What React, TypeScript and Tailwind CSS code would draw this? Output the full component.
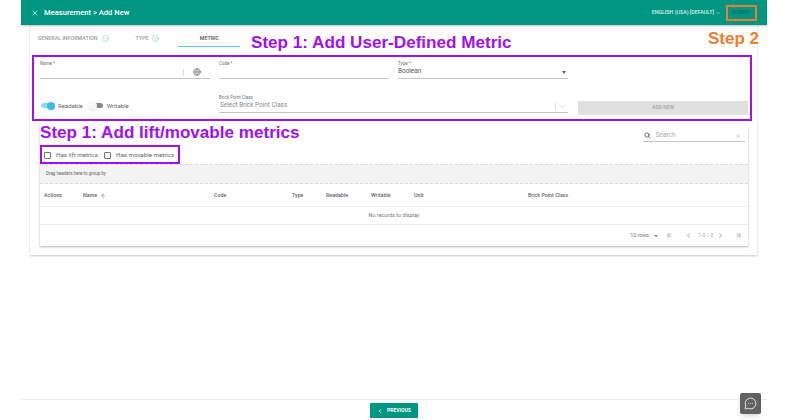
import { X, Globe, ChevronDown, CircleCheck, ArrowUp, Search, ChevronLeft, ChevronRight, ChevronFirst, ChevronLast, MessageCircleMore } from "lucide-react";

const columns = [
  { label: "Actions", w: "w-[39px]" },
  { label: "Name", w: "w-[131px]" },
  { label: "Code", w: "w-[78px]" },
  { label: "Type", w: "w-[34px]" },
  { label: "Readable", w: "w-[45px]" },
  { label: "Writable", w: "w-[43px]" },
  { label: "Unit", w: "w-[114px]" },
  { label: "Brick Point Class", w: "flex-1" },
];

function Field({ label, className, children }: { label: string; className: string; children?: React.ReactNode }) {
  return (
    <div className={`flex shrink-0 flex-col ${className}`}>
      <span className="h-[9px] text-[4.5px] leading-[9px] text-gray-500">{label}</span>
      <div className="box-content flex h-[8px] items-center justify-between border-b border-[#c4c4c4] pb-[2px] text-[6.4px] text-[#555]">
        {children}
      </div>
    </div>
  );
}

function Toggle({ on, label }: { on: boolean; label: string }) {
  return (
    <div className="flex items-center gap-[4px]">
      <div className={`relative h-[5px] w-[13px] rounded-full ${on ? "bg-[#8adbe8]" : "bg-[#8a8a8a]"}`}>
        <div
          className={`absolute top-[-1.5px] h-[8px] w-[8px] rounded-full shadow-sm ${on ? "right-[-1px] bg-[#3cc0da]" : "left-[-1px] bg-[#f7f7f7]"}`}
        />
      </div>
      <span className="text-[6px] text-[#666]">{label}</span>
    </div>
  );
}

export default function App() {
  return (
    <div className="relative flex h-[420px] w-[800px] flex-col overflow-hidden bg-white px-[21px] font-['Roboto',sans-serif]">
      <header className="flex h-[25px] w-[746px] shrink-0 items-center bg-[#009682] pl-[10px] pr-[10px] shadow-[0_1px_2px_rgba(0,0,0,0.25)]">
        <X size={8} strokeWidth={2} className="text-white" />
        <span className="ml-[5px] text-[7.6px] font-medium text-white">Measurement &gt; Add New</span>
        <span className="ml-auto text-[5.3px] font-medium text-[#d5efeb]">ENGLISH (USA) [DEFAULT]</span>
        <ChevronDown size={6} className="ml-[1px] text-[#d5efeb]" />
        <div className="ml-[5px] flex h-[16px] w-[31px] items-center justify-center border-2 border-[#ed7d31] text-[5px] font-medium text-[#0b6e62]">
          SUBMIT
        </div>
      </header>

      <main className="ml-[9px] h-[230px] w-[727px] shrink-0 shadow-[0_1px_2px_rgba(0,0,0,0.22)]">
        <nav className="flex h-[30px] items-start pl-[8px] pt-[10px] text-[5.3px] font-medium">
          <div className="flex items-center gap-[4px] text-[#9a9a9a]">
            <span>GENERAL INFORMATION</span>
            <CircleCheck size={7} className="text-[#7fcfc3]" />
          </div>
          <div className="ml-[27px] flex items-center gap-[4px] text-[#9a9a9a]">
            <span>TYPE</span>
            <CircleCheck size={7} className="text-[#7fcfc3]" />
          </div>
          <div className="ml-[19px] flex h-[12px] w-[62px] justify-center border-b border-[#56cfe1] text-[#555]">METRIC</div>
        </nav>

        <section className="relative ml-[2px] flex h-[66px] w-[720px] flex-col border-2 border-[#a010f0] pl-[6px] pr-[2px] pt-[2px]">
          <div className="flex gap-[9px]">
            <Field label="Name *" className="w-[170px]">
              <span />
              <div className="flex items-center">
                <span className="h-[7px] w-px bg-[#ddd]" />
                <Globe size={8} className="ml-[9px] text-[#666]" />
                <span className="ml-[9px]" />
              </div>
            </Field>
            <Field label="Code *" className="w-[170px]" />
            <Field label="Type *" className="w-[170px]">
              <span>Boolean</span>
              <span className="mr-[2px] h-0 w-0 border-x-[2.5px] border-t-[3px] border-x-transparent border-t-[#666]" />
            </Field>
          </div>
          <div className="mt-[14px] flex items-end gap-[9px]">
            <div className="flex h-[15px] w-[170px] shrink-0 items-center gap-[7px] pl-[1px]">
              <Toggle on label="Readable" />
              <Toggle on={false} label="Writable" />
            </div>
            <Field label="Brick Point Class" className="w-[349px]">
              <span className="pl-px text-[#8a8a8a]">Select Brick Point Class</span>
              <div className="flex items-center gap-[3px] pr-[2px]">
                <span className="h-[7px] w-px bg-[#ddd]" />
                <ChevronDown size={7} className="text-[#bbb]" />
              </div>
            </Field>
            <div className="mb-[-2px] ml-px flex h-[14px] w-[170px] shrink-0 items-center justify-center rounded-[1px] bg-[#e0e0e0] text-[5px] font-medium text-[#a8a8a8]">
              ADD NEW
            </div>
          </div>
        </section>

        <section className="relative ml-[10px] mt-[4px] flex h-[121px] w-[708px] flex-col shadow-[0_1px_2px_rgba(0,0,0,0.3)]">
          <div className="flex h-[17px] items-end justify-end pr-[3px]">
            <div className="flex h-[12px] w-[102px] items-center border-b border-[#c4c4c4] px-[1px] text-[6.5px] text-[#aaa]">
              <Search size={6.5} strokeWidth={3} className="text-[#555]" />
              <span className="ml-[5px]">Search</span>
              <X size={6} className="ml-auto mr-[3px] text-[#aaa]" />
            </div>
          </div>
          <div className="flex h-[22px] items-center pl-[4px] pt-[5px] text-[6.2px] text-[#666]">
            <div className="flex items-center gap-[5px]">
              <span className="h-[7px] w-[7px] rounded-[1px] border border-[#777]" />
              <span className="w-[42px] whitespace-nowrap">Has lift metrics</span>
            </div>
            <div className="ml-[6px] flex items-center gap-[5px]">
              <span className="h-[7px] w-[7px] rounded-[1px] border border-[#777]" />
              <span className="whitespace-nowrap">Has movable metrics</span>
            </div>
          </div>
          <div className="flex h-[20px] shrink-0 items-center border-y border-dashed border-[#ddd] bg-[#f3f3f3] pl-[6px] text-[4.5px] text-[#666]">
            Drag headers here to group by
          </div>
          <div className="flex h-[23px] shrink-0 items-center border-b border-[#eee] pl-[4px] pt-[1px] text-[5.3px] font-medium text-[#666]">
            {columns.map((c) => (
              <div key={c.label} className={`flex items-center gap-[3px] ${c.w}`}>
                {c.label}
                {c.label === "Name" && <ArrowUp size={6} />}
              </div>
            ))}
          </div>
          <div className="flex h-[18px] shrink-0 items-center justify-center border-b border-[#eee] text-[5.4px] text-[#777]">
            No records to display
          </div>
          <div className="flex h-[21px] shrink-0 items-center justify-end pr-[6px] text-[5.3px] text-[#777]">
            <span>10 rows</span>
            <span className="ml-[5px] h-0 w-0 border-x-[2px] border-t-[2.5px] border-x-transparent border-t-[#777]" />
            <ChevronFirst size={7} className="ml-[8px] text-[#666]" />
            <ChevronLeft size={7} className="ml-[12px] text-[#666]" />
            <span className="ml-[6px] w-[14px] whitespace-nowrap text-[#aaa]">1-0 / 0</span>
            <ChevronRight size={7} className="ml-[5px] text-[#666]" />
            <ChevronLast size={7} className="ml-[11px] text-[#666]" />
          </div>
        </section>
      </main>

      <footer className="mt-[144px] flex h-[21px] w-[746px] shrink-0 justify-center border-t border-[#eee] pt-[3px]">
        <div className="flex h-[15px] w-[48px] items-center justify-center gap-[4px] rounded-[1px] bg-[#009682] text-[5px] font-bold text-white shadow-sm">
          <ChevronLeft size={6} strokeWidth={3} />
          PREVIOUS
        </div>
      </footer>

      <div className="absolute left-[740px] top-[393px] flex h-[21px] w-[21px] items-center justify-center rounded-[2px] bg-[#616161] shadow-md">
        <MessageCircleMore size={13} strokeWidth={1.5} className="text-white" />
      </div>

      {/* annotations on top of the screenshot */}
      <span className="absolute left-[251px] top-[33px] whitespace-nowrap font-['Liberation_Sans',sans-serif] text-[17.1px] font-bold leading-[20px] text-[#a010f0]">
        Step 1: Add User-Defined Metric
      </span>
      <span className="absolute left-[708px] top-[29px] whitespace-nowrap font-['Liberation_Sans',sans-serif] text-[17px] font-bold leading-[20px] text-[#ed7d31]">
        Step 2
      </span>
      <span className="absolute left-[40px] top-[123px] whitespace-nowrap font-['Liberation_Sans',sans-serif] text-[17.1px] font-bold leading-[20px] text-[#a010f0]">
        Step 1: Add lift/movable metrics
      </span>
      <div className="absolute left-[40px] top-[145px] h-[19px] w-[140px] border-2 border-[#a010f0]" />
    </div>
  );
}
